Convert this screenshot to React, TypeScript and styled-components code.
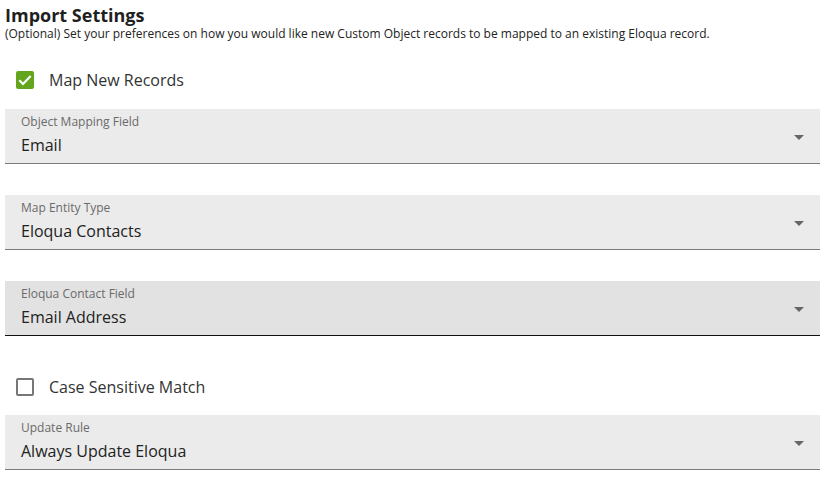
import React from "react";
import styled, { createGlobalStyle } from "styled-components";

const Global = createGlobalStyle`
  html, body { margin: 0; padding: 0; background: #ffffff; }
  body { font-family: "Open Sans", "Liberation Sans", sans-serif; color: #222; }
`;

const Page = styled.div`
  display: flex;
  flex-direction: column;
  padding: 3px 10px 0 5px;
`;

const Title = styled.h1`
  margin: 0;
  font-size: 18px;
  line-height: 24px;
  font-weight: 700;
  color: #1f1f1f;
`;

const Subtitle = styled.p`
  margin: -1px 0 0;
  font-size: 12px;
  line-height: 16px;
  color: #222;
`;

const CheckRow = styled.label<{ $top: number }>`
  display: flex;
  align-items: center;
  height: 38px;
  margin-top: ${(p) => p.$top}px;
  padding-left: 11px;
  gap: 15px;
  font-size: 16px;
  color: #333;
  cursor: pointer;
`;

const Box = styled.span<{ $checked: boolean }>`
  width: 18px;
  height: 18px;
  box-sizing: border-box;
  border-radius: 2px;
  display: flex;
  align-items: center;
  justify-content: center;
  background: ${(p) => (p.$checked ? "#64a51f" : "#fff")};
  border: ${(p) => (p.$checked ? "none" : "2px solid #777")};
`;

const Field = styled.div<{ $active?: boolean; $top: number }>`
  display: flex;
  align-items: center;
  margin-top: ${(p) => p.$top}px;
  height: 55px;
  box-sizing: border-box;
  background: ${(p) => (p.$active ? "#e2e2e2" : "#ebebeb")};
  border-bottom: 1px solid ${(p) => (p.$active ? "#111" : "#7b7b7b")};
  padding: 0 16px 0 16px;
`;

const FieldBody = styled.div`
  flex: 1;
  display: flex;
  flex-direction: column;
  align-self: flex-start;
  padding-top: 5px;
`;

const FieldLabel = styled.span`
  font-size: 12px;
  line-height: 16px;
  color: #6a6a6a;
`;

const FieldValue = styled.span`
  margin-top: 5px;
  font-size: 16px;
  line-height: 20px;
  color: #222;
`;

const Arrow = styled.span`
  width: 0;
  height: 0;
  border-left: 5px solid transparent;
  border-right: 5px solid transparent;
  border-top: 5px solid #666;
  margin-top: 2px;
`;

function Check({ checked, label, top }: { checked: boolean; label: string; top: number }) {
  return (
    <CheckRow $top={top}>
      <Box $checked={checked}>
        {checked && (
          <svg width="16" height="16" viewBox="0 0 24 24">
            <path d="M3.5 12.5l5.5 5.5L20.5 6" fill="none" stroke="#fff" strokeWidth="3.2" />
          </svg>
        )}
      </Box>
      {label}
    </CheckRow>
  );
}

function Select({ label, value, active, top }: { label: string; value: string; active?: boolean; top: number }) {
  return (
    <Field $active={active} $top={top}>
      <FieldBody>
        <FieldLabel>{label}</FieldLabel>
        <FieldValue>{value}</FieldValue>
      </FieldBody>
      <Arrow />
    </Field>
  );
}

export default function App() {
  return (
    <>
      <Global />
      <Page>
        <Title>Import Settings</Title>
        <Subtitle>
          (Optional) Set your preferences on how you would like new Custom Object records to be mapped to an existing Eloqua record.
        </Subtitle>
        <Check checked label="Map New Records" top={19} />
        <Select label="Object Mapping Field" value="Email" top={10} />
        <Select label="Map Entity Type" value="Eloqua Contacts" top={31} />
        <Select label="Eloqua Contact Field" value="Email Address" active top={31} />
        <Check checked={false} label="Case Sensitive Match" top={32} />
        <Select label="Update Rule" value="Always Update Eloqua" top={9} />
      </Page>
    </>
  );
}
